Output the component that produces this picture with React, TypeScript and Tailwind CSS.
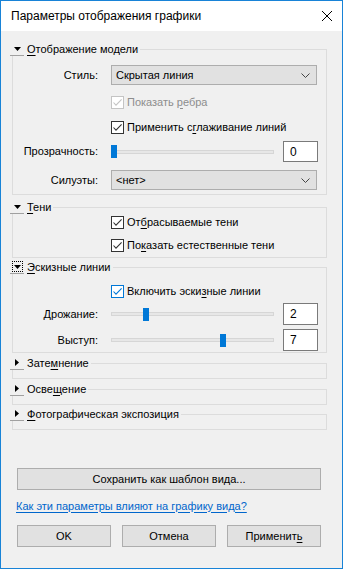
import React from "react";

const U = ({ children }: { children: React.ReactNode }) => (
  <span className="underline underline-offset-[2px]">{children}</span>
);

function Check({
  label,
  checked = true,
  disabled = false,
  focus = false,
}: {
  label: React.ReactNode;
  checked?: boolean;
  disabled?: boolean;
  focus?: boolean;
}) {
  const border = disabled
    ? "border-[#c4c4c4]"
    : focus
    ? "border-[#0078d7]"
    : "border-[#333333]";
  const stroke = disabled ? "#c4c4c4" : focus ? "#0078d7" : "#333333";
  return (
    <div className="flex items-center h-[14px] ml-[98px]">
      <div
        className={`w-[13px] h-[13px] bg-white border ${border} flex items-center justify-center shrink-0`}
      >
        {checked && (
          <svg width="11" height="11" viewBox="0 0 11 11">
            <path
              d="M1.5 5.5 L4 8.2 L9.6 2.4"
              fill="none"
              stroke={stroke}
              strokeWidth="1.1"
            />
          </svg>
        )}
      </div>
      <span className={`ml-[3px] ${disabled ? "text-[#8d8d8d]" : ""}`}>
        {label}
      </span>
    </div>
  );
}

function Select({ value }: { value: string }) {
  return (
    <div className="w-[206px] h-[20px] bg-[#e1e1e1] border border-[#adadad] flex items-center justify-between pl-[4px] pr-[6px]">
      <span>{value}</span>
      <svg width="9" height="5" viewBox="0 0 9 5">
        <polyline
          points="0.5,0.5 4.5,4.5 8.5,0.5"
          fill="none"
          stroke="#444"
          strokeWidth="1"
        />
      </svg>
    </div>
  );
}

function Slider({ pos }: { pos: number }) {
  return (
    <div className="relative w-[163px] h-[13px] flex items-center">
      <div className="w-full h-[4px] bg-[#e7e7e7] border border-[#d6d6d6]" />
      <div
        className="absolute top-0 w-[6px] h-[13px] bg-[#0078d7]"
        style={{ left: pos }}
      />
    </div>
  );
}

function Field({ value, h = "h-[21px]" }: { value: string; h?: string }) {
  return (
    <div
      className={`w-[35px] ${h} ml-[9px] bg-white border border-[#7a7a7a] flex items-center pl-[6px] text-[12px]`}
    >
      {value}
    </div>
  );
}

function Row({
  label,
  children,
  h = "h-[20px]",
  mt,
}: {
  label: string;
  children: React.ReactNode;
  h?: string;
  mt: string;
}) {
  return (
    <div className={`flex items-center ${h} ${mt}`}>
      <div className="w-[85px] text-right">{label}</div>
      <div className="ml-[13px] flex items-center">{children}</div>
    </div>
  );
}

function Section({
  title,
  open,
  focus = false,
  mt,
  children,
}: {
  title: React.ReactNode;
  open: boolean;
  focus?: boolean;
  mt: string;
  children?: React.ReactNode;
}) {
  const tri = open ? (
    <svg width="7" height="4" viewBox="0 0 7 4">
      <polygon points="0,0 7,0 3.5,4" fill="#000" />
    </svg>
  ) : (
    <svg width="4" height="7" viewBox="0 0 4 7">
      <polygon points="0,0 4,3.5 0,7" fill="#000" />
    </svg>
  );
  return (
    <fieldset className={`w-[315px] border border-[#dcdcdc] ${mt}`}>
      <legend className="ml-[-3px]">
        <div className="flex items-center h-[14px]">
          <div className="w-[14px] h-[14px] bg-[#f0f0f0] border-b border-[#a0a0a0] flex items-center justify-center">
            {focus ? (
              <div className="w-[11px] h-[11px] border border-dotted border-black flex items-center justify-center">
                {tri}
              </div>
            ) : (
              tri
            )}
          </div>
          <span className="ml-[3px] pr-[2px]">{title}</span>
        </div>
      </legend>
      {children ?? <div className="h-[8px]" />}
    </fieldset>
  );
}

function Btn({ children, w }: { children: React.ReactNode; w: string }) {
  return (
    <div
      className={`${w} h-[22px] bg-[#e1e1e1] border border-[#adadad] flex items-center justify-center`}
    >
      {children}
    </div>
  );
}

export default function App() {
  return (
    <div className="w-[343px] h-[569px] border border-[#1883d7] bg-[#f0f0f0] flex flex-col text-[11px] leading-none text-black font-['Liberation_Sans',Arial,sans-serif] select-none">
      <div className="h-[30px] shrink-0 bg-white flex items-center justify-between pl-[10px] pr-[10px] text-[12px]">
        <span>Параметры отображения графики</span>
        <svg width="10" height="10" viewBox="0 0 10 10">
          <path d="M0 0 L10 10 M10 0 L0 10" stroke="#000" strokeWidth="1" />
        </svg>
      </div>

      <div className="flex flex-col pl-[11px] pt-[11px]">
        <Section
          open
          mt="mt-0"
          title={
            <>
              <U>О</U>тображение модели
            </>
          }
        >
          <div className="flex flex-col pt-[9px] pb-[4px]">
            <Row label="Стиль:" mt="mt-0">
              <Select value="Скрытая линия" />
            </Row>
            <div className="mt-[10px]">
              <Check
                disabled
                label={
                  <>
                    Показать <U>р</U>ебра
                  </>
                }
              />
            </div>
            <div className="mt-[11px] mb-[3px]">
              <Check
                label={
                  <>
                    Применить с<U>г</U>лаживание линий
                  </>
                }
              />
            </div>
            <Row label="Прозрачность:" h="h-[21px]" mt="mt-[4px]">
              <Slider pos={0} />
              <Field value="0" />
            </Row>
            <Row label="Силуэты:" mt="mt-[8px]">
              <Select value="<нет>" />
            </Row>
          </div>
        </Section>

        <Section
          open
          mt="mt-[5px]"
          title={
            <>
              <U>Т</U>ени
            </>
          }
        >
          <div className="flex flex-col pt-[1px] pb-[5px]">
            <Check
              label={
                <>
                  От<U>б</U>расываемые тени
                </>
              }
            />
            <div className="mt-[9px]">
              <Check
                label={
                  <>
                    По<U>к</U>азать естественные тени
                  </>
                }
              />
            </div>
          </div>
        </Section>

        <Section
          open
          focus
          mt="mt-[2px]"
          title={
            <>
              <U>Э</U>скизные линии
            </>
          }
        >
          <div className="flex flex-col pt-[10px] pb-[1px]">
            <Check
              focus
              label={
                <>
                  Включить эски<U>з</U>ные линии
                </>
              }
            />
            <Row label="Дрожание:" h="h-[22px]" mt="mt-[5px]">
              <Slider pos={32} />
              <Field value="2" h="h-[22px]" />
            </Row>
            <Row label="Выступ:" h="h-[22px]" mt="mt-[4px]">
              <Slider pos={109} />
              <Field value="7" h="h-[22px]" />
            </Row>
          </div>
        </Section>

        <Section
          open={false}
          mt="mt-[3px]"
          title={
            <>
              Зате<U>м</U>нение
            </>
          }
        />
        <Section
          open={false}
          mt="mt-[3px]"
          title={
            <>
              Осве<U>щ</U>ение
            </>
          }
        />
        <Section
          open={false}
          mt="mt-[2px]"
          title={
            <>
              <U>Ф</U>отографическая экспозиция
            </>
          }
        />

        <div className="mt-[38px] ml-[5px]">
          <Btn w="w-[304px]">Сохранить как шаблон вида...</Btn>
        </div>
        <div className="mt-[9px] ml-[4px] h-[14px] flex items-center">
          <span className="text-[#0066cc] underline underline-offset-[2px]">
            Как эти параметры влияют на графику вида?
          </span>
        </div>
        <div className="mt-[12px] ml-[5px] flex gap-[11px]">
          <Btn w="w-[94px]">OK</Btn>
          <Btn w="w-[94px]">Отмена</Btn>
          <Btn w="w-[94px]">
            <span>
              Применит<U>ь</U>
            </span>
          </Btn>
        </div>
      </div>
    </div>
  );
}
